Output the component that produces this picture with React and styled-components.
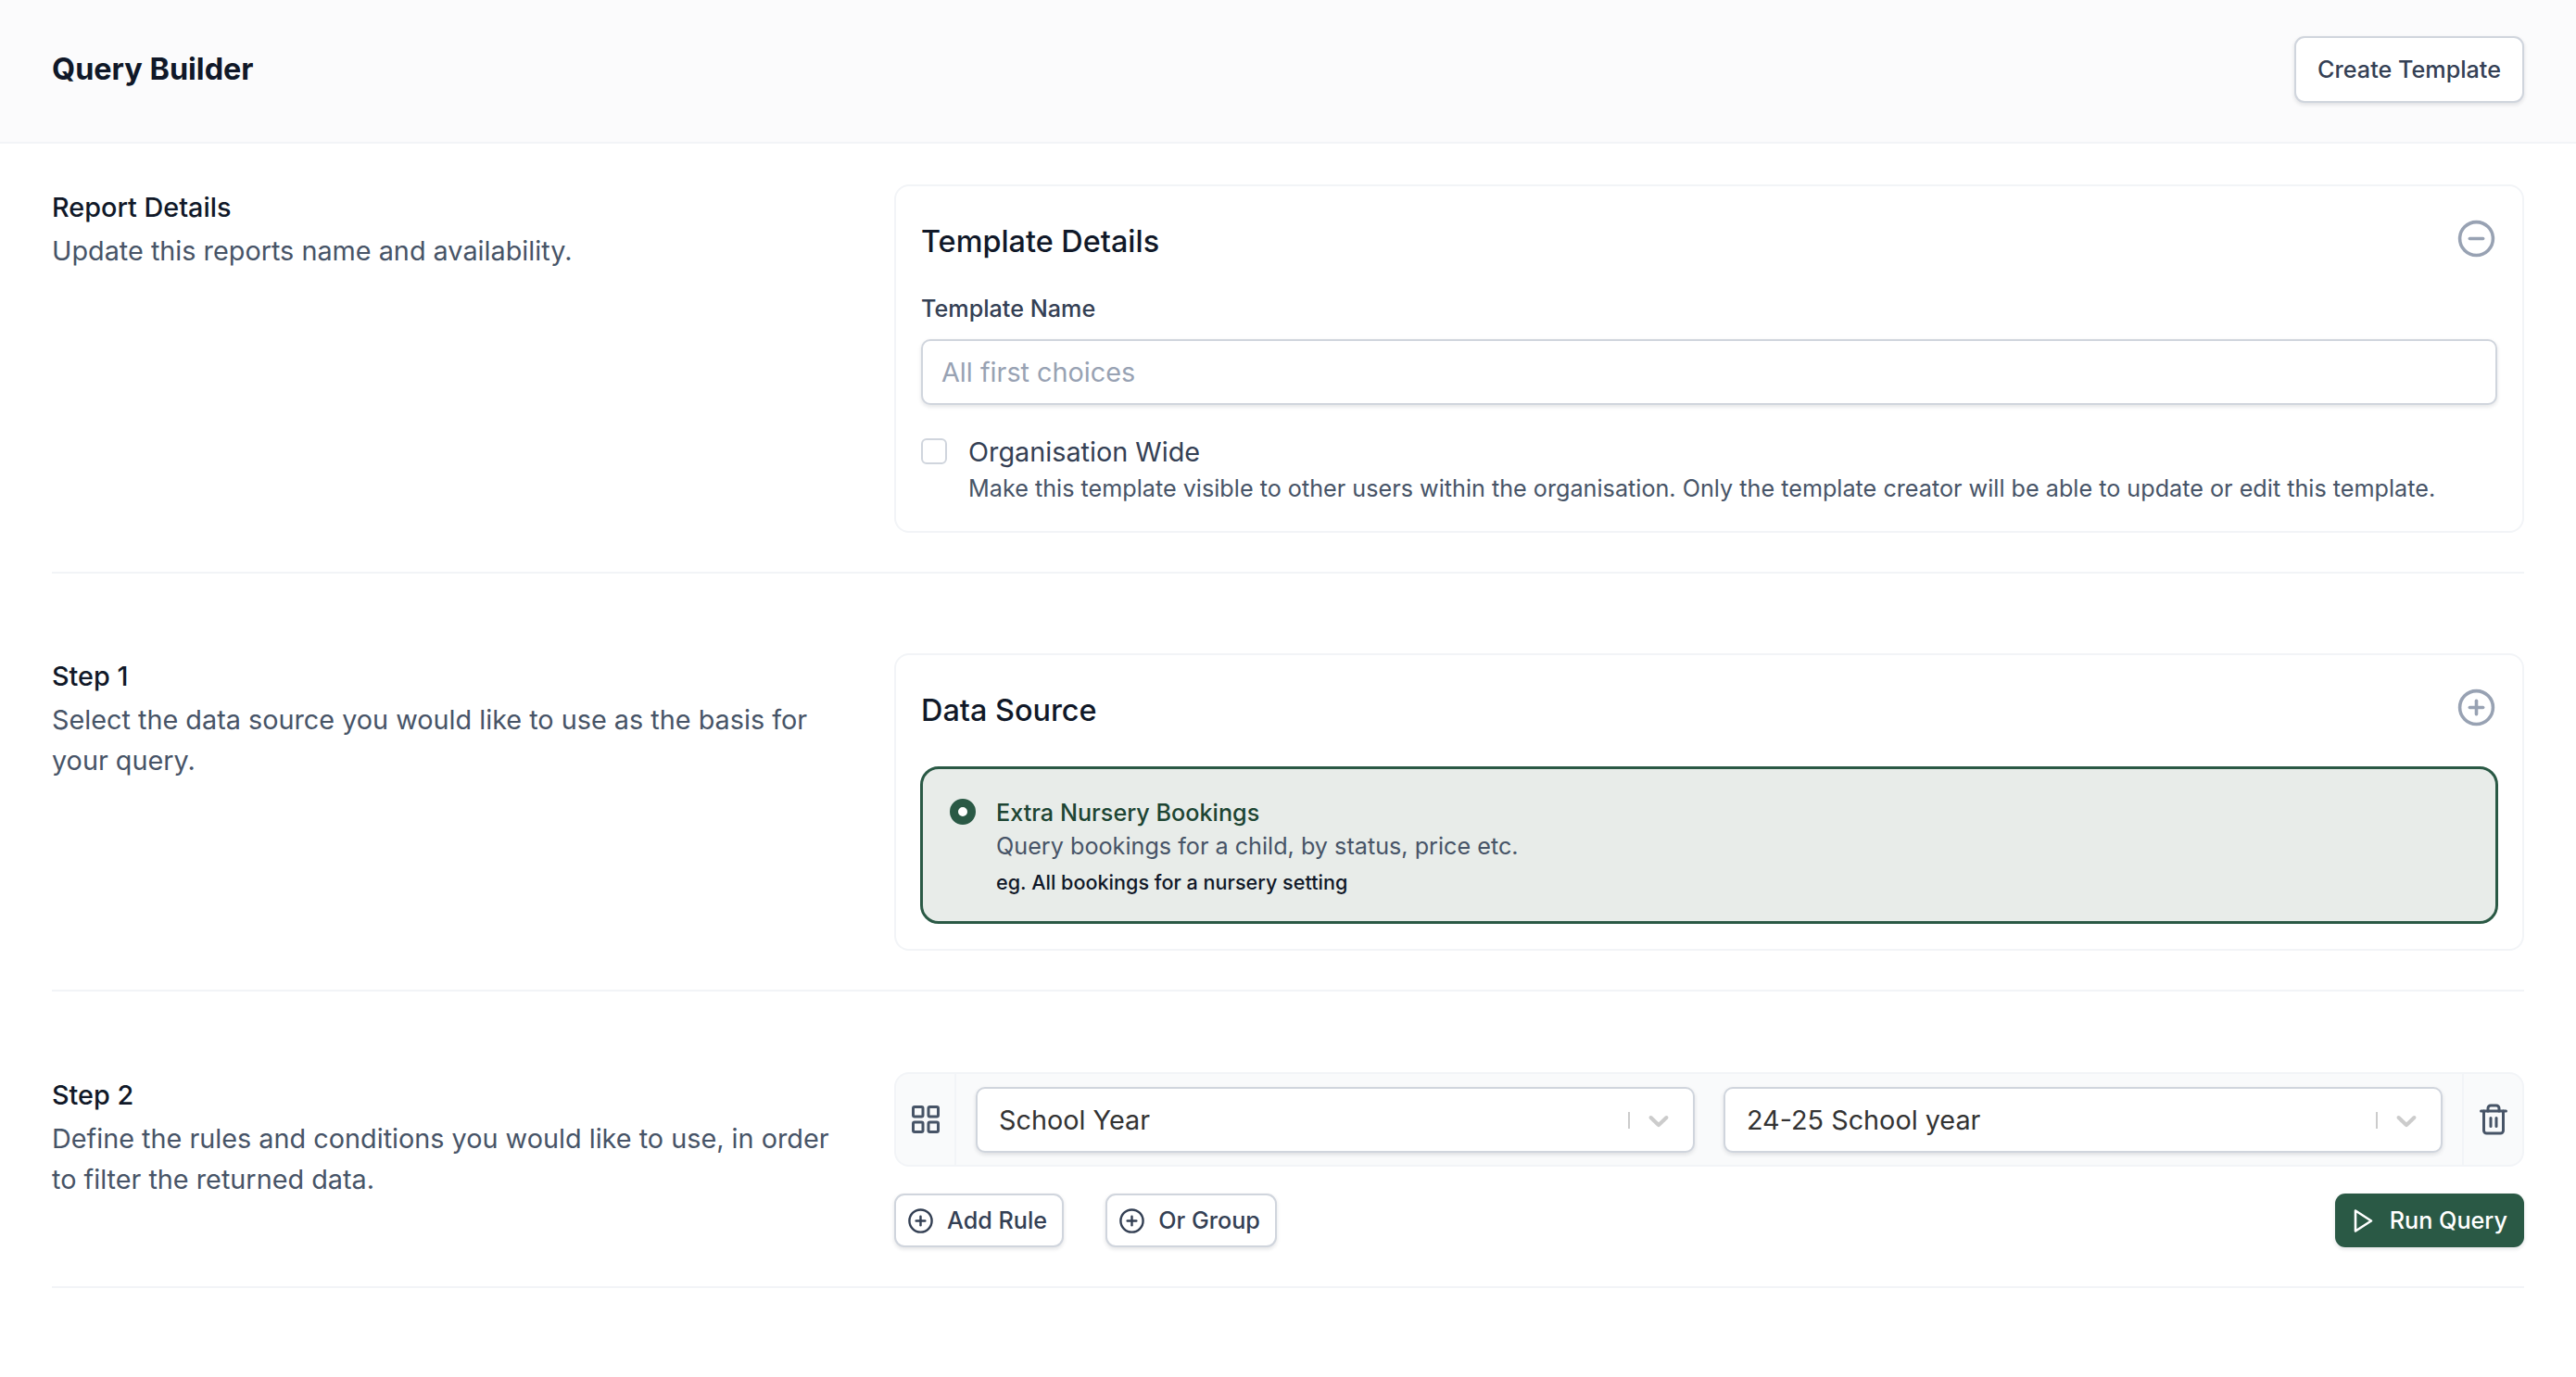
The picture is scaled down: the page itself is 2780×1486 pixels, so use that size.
import React from 'react';
import styled, { createGlobalStyle } from 'styled-components';
import { CircleMinus, CirclePlus, LayoutGrid, Trash2 } from 'lucide-react';

const GlobalStyle = createGlobalStyle`
  * { box-sizing: border-box; }
  html, body { margin: 0; background: #fff; }
  body { font-family: Inter, "Liberation Sans", sans-serif; color: #111827; }
`;

const SelectChevron = () => (
  <svg width="36" height="36" viewBox="0 0 20 20" fill="#cccccc">
    <path d="M4.516 7.548c0.436-0.446 1.043-0.481 1.576 0l3.908 3.747 3.908-3.747c0.533-0.481 1.141-0.446 1.574 0 0.436 0.445 0.408 1.197 0 1.615-0.406 0.418-4.695 4.502-4.695 4.502-0.217 0.223-0.502 0.335-0.787 0.335s-0.57-0.112-0.789-0.335c0 0-4.287-4.084-4.695-4.502s-0.436-1.17 0-1.615z" />
  </svg>
);

const PlayIcon = () => (
  <svg width="24" height="29" viewBox="0 0 24 29" fill="none" stroke="#ffffff" strokeWidth="2.6" strokeLinejoin="round">
    <path d="M4 3.5 L21 14.5 L4 25.5 Z" />
  </svg>
);

const RuleSelect = ({ value }) => (
  <Select>
    <SelectValue>{value}</SelectValue>
    <SelectDivider />
    <SelectIcon><SelectChevron /></SelectIcon>
  </Select>
);

const App = () => (
  <Page>
    <GlobalStyle />
    <Header>
      <PageTitle>Query Builder</PageTitle>
      <OutlineButton $wide>Create Template</OutlineButton>
    </Header>
    <Main>
      <Section $top={44} $bottom={42}>
        <Intro>
          <IntroTitle>Report Details</IntroTitle>
          <IntroText>Update this reports name and availability.</IntroText>
        </Intro>
        <Card>
          <CardHeader>
            <CardTitle>Template Details</CardTitle>
            <HeaderIcon><CircleMinus size={43} strokeWidth={2} color="#98a2b3" /></HeaderIcon>
          </CardHeader>
          <FieldLabel>Template Name</FieldLabel>
          <TextInput placeholder="All first choices" readOnly />
          <CheckRow>
            <CheckBox />
            <div>
              <CheckTitle>Organisation Wide</CheckTitle>
              <CheckHint>Make this template visible to other users within the organisation. Only the template creator will be able to update or edit this template.</CheckHint>
            </div>
          </CheckRow>
        </Card>
      </Section>

      <Section $top={86} $bottom={42}>
        <Intro>
          <IntroTitle>Step 1</IntroTitle>
          <IntroText>Select the data source you would like to use as the basis for your query.</IntroText>
        </Intro>
        <Card>
          <CardHeader $source>
            <CardTitle>Data Source</CardTitle>
            <HeaderIcon><CirclePlus size={43} strokeWidth={2} color="#98a2b3" /></HeaderIcon>
          </CardHeader>
          <SourceOption>
            <Radio />
            <div>
              <SourceName>Extra Nursery Bookings</SourceName>
              <SourceText>Query bookings for a child, by status, price etc.</SourceText>
              <SourceExample>eg. All bookings for a nursery setting</SourceExample>
            </div>
          </SourceOption>
        </Card>
      </Section>

      <Section $top={87} $bottom={42}>
        <Intro>
          <IntroTitle>Step 2</IntroTitle>
          <IntroText>Define the rules and conditions you would like to use, in order to filter the returned data.</IntroText>
        </Intro>
        <div>
          <RuleRow>
            <RuleHandle><LayoutGrid size={36} strokeWidth={2} color="#475467" /></RuleHandle>
            <RuleFields>
              <RuleSelect value="School Year" />
              <RuleSelect value="24-25 School year" />
            </RuleFields>
            <RuleDelete><Trash2 size={36} strokeWidth={2} color="#475467" /></RuleDelete>
          </RuleRow>
          <Actions>
            <OutlineButton><CirclePlus size={29} strokeWidth={2} />Add Rule</OutlineButton>
            <OutlineButton><CirclePlus size={29} strokeWidth={2} />Or Group</OutlineButton>
            <RunButton><PlayIcon />Run Query</RunButton>
          </Actions>
        </div>
      </Section>
    </Main>
  </Page>
);

const Page = styled.div`
  min-height: 1486px;
  background: #ffffff;
`;

const Header = styled.header`
  height: 155px;
  padding: 0 56px 4px;
  display: flex;
  align-items: center;
  justify-content: space-between;
  background: #fbfbfc;
  border-bottom: 2px solid #f2f4f7;
`;

const PageTitle = styled.h1`
  margin: 0;
  font-size: 32.4px;
  font-weight: 700;
  color: #101828;
`;

const OutlineButton = styled.button`
  height: ${p => (p.$wide ? '72px' : '58px')};
  padding: 0 ${p => (p.$wide ? '23px' : '16px')} 0 ${p => (p.$wide ? '23px' : '12px')};
  display: flex;
  align-items: center;
  gap: 14px;
  font-family: inherit;
  font-size: 25.2px;
  font-weight: 500;
  color: #344054;
  background: #ffffff;
  border: 2px solid #d0d5dd;
  border-radius: 11px;
  box-shadow: 0 2px 4px rgba(16, 24, 40, 0.12);
`;

const Main = styled.main`
  padding: 0 56px;
`;

const Section = styled.section`
  display: grid;
  grid-template-columns: 909px 1fr;
  margin-top: ${p => p.$top}px;
  padding-bottom: ${p => p.$bottom}px;
  border-bottom: 2px solid #f2f4f7;
`;

const Intro = styled.div`
  padding: 3px 60px 0 0;
`;

const IntroTitle = styled.h2`
  margin: 0 0 3px;
  font-size: 28.8px;
  line-height: 44px;
  font-weight: 500;
  color: #101828;
`;

const IntroText = styled.p`
  margin: 0;
  font-size: 28.8px;
  line-height: 44px;
  color: #475467;
`;

const Card = styled.div`
  padding: 30px 27px 26px;
  border: 2px solid #f2f4f7;
  border-radius: 16px;
`;

const CardHeader = styled.div`
  height: 58px;
  margin-bottom: ${p => (p.$source ? '32px' : '26px')};
  display: flex;
  align-items: center;
  justify-content: space-between;
`;

const CardTitle = styled.h3`
  margin: 0;
  font-size: 32.4px;
  font-weight: 500;
  color: #101828;
`;

const HeaderIcon = styled.span`
  display: flex;
  margin-right: 1px;
  margin-bottom: 6px;
`;

const FieldLabel = styled.label`
  display: block;
  margin-bottom: 15px;
  font-size: 25.2px;
  line-height: 36px;
  font-weight: 500;
  color: #344054;
`;

const TextInput = styled.input`
  display: block;
  width: 100%;
  height: 71px;
  padding: 0 20px;
  font-family: inherit;
  font-size: 28.8px;
  background: #ffffff;
  border: 2px solid #d0d5dd;
  border-radius: 10px;
  box-shadow: 0 2px 4px rgba(16, 24, 40, 0.12);
  outline: none;

  &::placeholder {
    color: #98a2b3;
    opacity: 1;
  }
`;

const CheckRow = styled.div`
  display: flex;
  gap: 23px;
  margin-top: 31px;
`;

const CheckBox = styled.span`
  flex: none;
  width: 28px;
  height: 28px;
  margin-top: 5px;
  background: #ffffff;
  border: 2px solid #d0d5dd;
  border-radius: 6px;
`;

const CheckTitle = styled.div`
  font-size: 28.8px;
  line-height: 40px;
  color: #344054;
`;

const CheckHint = styled.div`
  margin-top: -1px;
  font-size: 25.2px;
  line-height: 40px;
  color: #475467;
`;

const SourceOption = styled.div`
  display: flex;
  gap: 22px;
  height: 170px;
  margin: 0 -1px 1px;
  padding: 29px 29px;
  background: #e8ece9;
  border: 3px solid #2a5945;
  border-radius: 20px;
`;

const Radio = styled.span`
  flex: none;
  width: 28px;
  height: 28px;
  margin-top: 3px;
  background: #ffffff;
  border: 9px solid #2a5945;
  border-radius: 50%;
`;

const SourceName = styled.div`
  font-size: 25.2px;
  line-height: 36px;
  font-weight: 500;
  color: #1d4533;
`;

const SourceText = styled.div`
  font-size: 25.2px;
  line-height: 36px;
  color: #475467;
`;

const SourceExample = styled.div`
  margin-top: 3px;
  font-size: 21.6px;
  line-height: 36px;
  font-weight: 500;
  color: #101828;
`;

const RuleRow = styled.div`
  display: flex;
  height: 102px;
  background: #f9fafb;
  border: 2px solid #f2f4f7;
  border-radius: 16px;
`;

const RuleHandle = styled.div`
  flex: none;
  width: 65px;
  display: flex;
  align-items: center;
  justify-content: center;
  border-right: 2px solid #f2f4f7;
`;

const RuleFields = styled.div`
  flex: 1;
  display: grid;
  grid-template-columns: 1fr 1fr;
  align-items: start;
  gap: 31px;
  padding: 14px 21px;
`;

const RuleDelete = styled.div`
  flex: none;
  width: 65px;
  display: flex;
  align-items: center;
  justify-content: center;
  border-left: 2px solid #f2f4f7;
`;

const Select = styled.div`
  display: flex;
  align-items: center;
  height: 71px;
  padding: 0 19px 0 23px;
  background: #ffffff;
  border: 2px solid #d0d5dd;
  border-radius: 10px;
  box-shadow: 0 2px 4px rgba(16, 24, 40, 0.12);
`;

const SelectValue = styled.span`
  flex: 1;
  font-size: 28.8px;
  color: #333333;
`;

const SelectDivider = styled.span`
  width: 2px;
  height: 18px;
  background: #cccccc;
`;

const SelectIcon = styled.span`
  display: flex;
  margin-left: 13px;
`;

const Actions = styled.div`
  display: flex;
  align-items: center;
  gap: 45px;
  margin-top: 29px;
`;

const RunButton = styled.button`
  height: 58px;
  margin-left: auto;
  padding: 0 18px;
  display: flex;
  align-items: center;
  gap: 17px;
  font-family: inherit;
  font-size: 25.2px;
  font-weight: 500;
  color: #ffffff;
  background: #2a5945;
  border: none;
  border-radius: 11px;
  box-shadow: 0 2px 4px rgba(16, 24, 40, 0.12);
`;

export default App;
